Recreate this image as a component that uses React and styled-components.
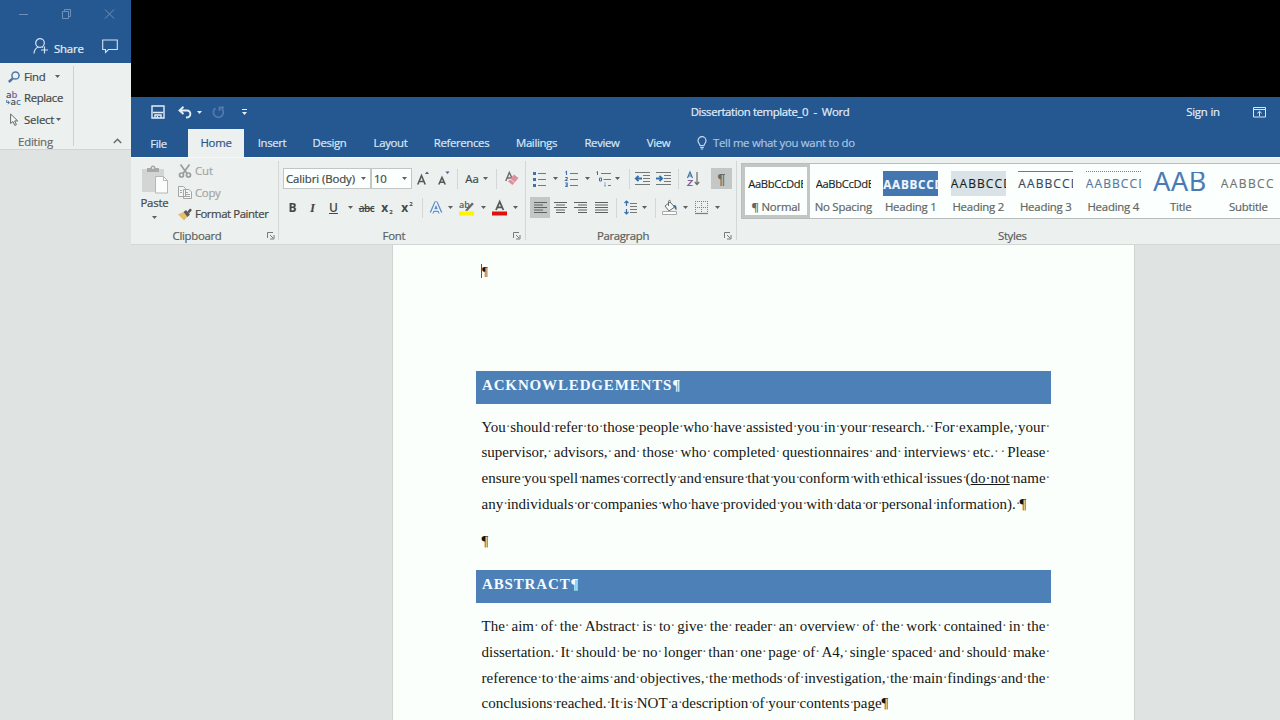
import React from "react";
import styled, { createGlobalStyle, css } from "styled-components";

const blue = "#255791";
const ribbon = "#ecf0ee";
const ink = "#444846";

const GlobalStyle = createGlobalStyle`
  * { box-sizing: border-box; }
  body { margin: 0; overflow: hidden; background: #dfe3e1; }
`;

const Screen = styled.div`
  width: 1280px;
  height: 720px;
  display: flex;
  overflow: hidden;
  background: #dfe3e1;
  color: ${ink};
  font: 11.4px/16px "Open Sans", "Noto Sans", sans-serif;
  white-space: nowrap;
`;

const Text = styled.span`
  display: block;
  flex: none;
  letter-spacing: ${(p) => p.$ls ?? -0.35}px;
  padding-top: ${(p) => p.$drop || 0}px;
  color: ${(p) => p.$color || "inherit"};
  white-space: pre;
  -webkit-text-stroke: 0.2px currentColor;
`;

const Item = styled.div`
  flex: none;
  display: flex;
  align-items: center;
  justify-content: ${(p) => (p.$left ? "flex-start" : "center")};
  width: ${(p) => p.$w}px;
  height: ${(p) => (p.$h ? p.$h + "px" : "auto")};
  margin-left: ${(p) => p.$gap || 0}px;
  background: ${(p) => (p.$pressed ? "#c3c7c5" : "none")};
  svg { flex: none; display: block; overflow: visible; }
`;

/* ---- left window ---- */
const SideWindow = styled.aside`
  width: 131px;
  flex: none;
  display: flex;
  flex-direction: column;
`;
const SideHeader = styled.div`
  height: 63px;
  background: ${blue};
  color: #e6f0f8;
`;
const WindowButtons = styled.div`
  display: flex;
  align-items: center;
  height: 28px;
  padding-left: 17px;
`;
const ShareRow = styled.div`
  display: flex;
  align-items: center;
  height: 35px;
  padding: 2px 0 0 33px;
`;
const SideRibbon = styled.div`
  height: 87px;
  display: flex;
  background: ${ribbon};
  border-bottom: 1px solid #d0d4d2;
`;
const EditingGroup = styled.div`
  width: 74px;
  height: 80px;
  margin-top: 3px;
  border-right: 1px solid #cdd1cf;
`;
const EditRow = styled.div`
  display: flex;
  align-items: center;
  height: 21.6px;
`;
const EditLabel = styled.div`
  padding: 3px 0 0 18px;
  color: #666a68;
`;
const Collapse = styled.div`
  flex: 1;
  display: flex;
  align-items: flex-end;
  justify-content: flex-end;
  padding: 0 9px 5px 0;
`;

/* ---- main window ---- */
const MainWindow = styled.main`
  flex: 1;
  min-width: 0;
  display: flex;
  flex-direction: column;
  overflow: hidden;
`;
const Blackout = styled.div`
  height: 97px;
  flex: none;
  background: #000;
`;
const TitleBar = styled.header`
  display: flex;
  align-items: center;
  flex: none;
  height: 32px;
  padding-bottom: 2px;
  background: ${blue};
  color: #e4eef8;
`;
const TabBar = styled.nav`
  display: flex;
  flex: none;
  height: 28px;
  background: ${blue};
  color: #dbe7f3;
`;
const Tab = styled.div`
  flex: none;
  display: flex;
  align-items: center;
  justify-content: center;
  width: ${(p) => p.$w}px;
  padding-top: ${(p) => p.$drop || 0}px;
  ${(p) => p.$active && css`background: ${ribbon}; color: #2b5488;`}
`;
const Ribbon = styled.section`
  display: flex;
  flex: none;
  height: 88px;
  background: ${ribbon};
  border-top: 1px solid #f4f8f6;
  border-bottom: 1px solid #d2d6d4;
`;
const Group = styled.div`
  flex: none;
  width: ${(p) => p.$w}px;
  display: flex;
  flex-direction: column;
`;
const Divider = styled.div`
  flex: none;
  width: 1px;
  height: 79px;
  margin-top: 3px;
  background: #d3d7d5;
`;
const GroupBody = styled.div`
  height: 70px;
  display: flex;
`;
const ToolRows = styled.div`
  display: flex;
  flex-direction: column;
  padding: 10px 0 0 4px;
`;
const ToolRow = styled.div`
  display: flex;
  align-items: center;
  height: 21px;
  margin-bottom: 8px;
`;
const GroupLabel = styled.div`
  display: flex;
  align-items: center;
  height: 16px;
  color: #5b5f5d;
`;
const Sep = styled.i`
  flex: none;
  width: 1px;
  height: 20px;
  margin-left: ${(p) => p.$gap}px;
  background: #d3d7d5;
`;
const Combo = styled.div`
  flex: none;
  display: flex;
  align-items: center;
  justify-content: space-between;
  width: ${(p) => p.$w}px;
  height: 21px;
  padding: 0 4px 0 2px;
  border: 1px solid #c2c6c4;
  background: #fbfffd;
`;
const PasteButton = styled.div`
  width: 47px;
  display: flex;
  flex-direction: column;
  align-items: center;
  padding-top: 7px;
`;
const ClipRows = styled.div`
  padding-top: 2.5px;
`;
const ClipRow = styled.div`
  display: flex;
  align-items: center;
  height: 21.6px;
  color: ${(p) => (p.$off ? "#a2a6a4" : ink)};
`;
const Glyph = styled.span`
  font: ${(p) => p.$font};
  color: ${(p) => p.$color || ink};
  text-decoration: ${(p) => p.$deco || "none"};
  letter-spacing: ${(p) => p.$ls || 0}px;
  sub, sup { font-size: 6px; line-height: 0; margin-left: 1px; }
  sub { vertical-align: -2px; }
  sup { vertical-align: 6px; }
`;

/* ---- styles gallery ---- */
const StylesGroup = styled.div`
  flex: 1;
  min-width: 0;
  padding: 5px 0 0 4px;
`;
const Gallery = styled.div`
  display: flex;
  height: 56px;
  background: #fbfffd;
  border: solid #b9bdbb;
  border-width: 1px 0 1px 1px;
  overflow: hidden;
`;
const StyleCell = styled.div`
  flex: none;
  width: 67.5px;
  display: flex;
  flex-direction: column;
  align-items: center;
  height: 54px;
  padding-top: 7px;
  box-shadow: ${(p) => (p.$on ? "inset 0 0 0 3px #c2c6c4" : "none")};
  color: #626664;
`;
const Preview = styled.div`
  width: 55px;
  height: 25px;
  overflow: hidden;
  display: flex;
  align-items: center;
  margin-bottom: 3px;
  padding-bottom: ${(p) => p.$lift || 0}px;
  background: ${(p) => p.$bg || "none"};
  border-top: ${(p) => p.$line || "1px solid transparent"};
  color: ${(p) => p.$color || "#1b1f1d"};
  font-size: ${(p) => p.$size || 12}px;
  font-weight: ${(p) => p.$weight || 400};
  letter-spacing: ${(p) => p.$ls || 0}px;
  -webkit-text-stroke: 0.15px currentColor;
`;
const StylesLabel = styled.div`
  padding: 9px 0 0 257px;
  color: #5b5f5d;
`;

/* ---- document ---- */
const Page = styled.article`
  flex: 1;
  width: 743px;
  margin-left: 261px;
  padding: 0 82px 0 83px;
  background: #fbfffc;
  border: solid #cfd3d1;
  border-width: 0 1px;
  color: #141615;
  font: 15px/26px "Liberation Serif", serif;
`;
const CursorLine = styled.div`
  display: flex;
  align-items: center;
  height: 125.5px;
  padding: 0 0 73px 5px;
  font-size: 13px;
`;
const Caret = styled.i`
  width: 1px;
  height: 14px;
  background: #555;
`;
const Heading = styled.h2`
  margin: 0;
  height: 33.5px;
  width: 575px;
  padding-left: 6px;
  background: #4c80b7;
  color: #f3fbff;
  font-size: 15px;
  line-height: 28px;
  letter-spacing: ${(p) => p.$ls}px;
`;
const Paragraph = styled.div`
  padding: 9.5px 0 0 5.500px;
  width: 571px;
`;
const Line = styled.div`
  display: flex;
  height: 25.8px;
  width: ${(p) => (p.$natural ? "max-content" : "564px")};
`;
const Space = styled.span`
  flex: ${(p) => (p.$natural ? "0 0 3.73px" : "1 1 0")};
  min-width: 0;
  color: #5a5e5c;
  font-size: 14px;
`;
const Trailing = styled.span`
  width: 0;
  color: #5a5e5c;
  font-size: 14px;
`;
const EmptyLine = styled.div`
  height: 53.3px;
  padding: 11.500px 0 0 5.500px;
`;

const Down = ({ c = "#5c605e" }) => (
  <svg width="5" height="3" viewBox="0 0 5 3"><path d="M0 0h5L2.5 3z" fill={c} /></svg>
);
const Launcher = () => (
  <svg width="8" height="8" viewBox="0 0 8 8" fill="none" stroke="#777b79"><path d="M.5 6V.5H6M3 3l3 3M7 3v4H3" /></svg>
);
const bars = (rows) => (
  <svg width="13" height="11" viewBox="0 0 13 11" stroke="#5c605e" strokeWidth="1">
    {rows.map(([a, b], i) => <path key={i} d={`M${a} ${0.5 + i * 2.5}H${b}`} />)}
  </svg>
);
const ListIcon = ({ kind }) => (
  <svg width="14" height="16" viewBox="0 0 14 16">
    <path d="M5 2.5h8M5 8.5h8M5 14.5h8" stroke="#747876" />
    {kind === "dots" ? (
      <g fill="#3e72ad"><rect y="1" width="3" height="3" /><rect y="7" width="3" height="3" /><rect y="13" width="3" height="3" /></g>
    ) : (
      <g fill="none" stroke="#3e72ad" strokeWidth="1.1"><path d="M.5 1.2 1.5.5V4M.2 6.5h2v1.3L.5 9.5h2M.2 12h2v3.4h-2M.8 13.7h1.4" /></g>
    )}
  </svg>
);
const IndentIcon = ({ right }) => (
  <svg width="15" height="13" viewBox="0 0 15 13" fill="none">
    <path d="M0 .5h15M8 3.5h7M8 6.5h7M8 9.5h7M0 12.5h15" stroke="#747876" />
    <path d={right ? "M0 6.5h6M3.5 3.8l2.7 2.7-2.7 2.7" : "M1 6.5h6M3.5 3.8.8 6.5l2.7 2.7"} stroke="#3470ad" strokeWidth="1.8" />
  </svg>
);

function SidePanel() {
  return (
    <SideWindow>
      <SideHeader>
        <WindowButtons>
          <svg width="100" height="12" viewBox="0 0 100 12" fill="none" stroke="#6d91bb">
            <path d="M2 6.500h9M45.500 3.500h6v7h-6zM47.500 3.500v-2h6v7h-2M88 1.500l9 9M97 1.500l-9 9" />
          </svg>
        </WindowButtons>
        <ShareRow>
          <svg width="15" height="17" viewBox="0 0 15 17" fill="none" stroke="#d4e2f0" strokeWidth="1.2">
            <circle cx="7" cy="5" r="4.300" /><path d="M1 15.500c.3-3.500 2-5.800 4.500-6.500M9 9l1 .6M11.500 8.500v7M8 12h7" />
          </svg>
          <Item $w={30} $gap={6} $left><Text $ls={-0.2} $drop={4}>Share</Text></Item>
          <Item $w={16} $gap={18}>
            <svg width="16" height="15" viewBox="0 0 16 15" fill="none" stroke="#d4e2f0" strokeWidth="1.1"><path d="M.7 1h14.600v9.500H6.500l-3 3v-3H.7z" /></svg>
          </Item>
        </ShareRow>
      </SideHeader>
      <SideRibbon>
        <EditingGroup>
          <EditRow>
            <Item $w={12} $gap={8}>
              <svg width="12" height="12" viewBox="0 0 12 12" fill="none" stroke="#4b78a8"><circle cx="7.500" cy="4.500" r="3.600" strokeWidth="1.500" /><path d="M4.800 7.300.8 11" strokeWidth="2.400" /></svg>
            </Item>
            <Item $w={29} $gap={4} $left><Text>Find</Text></Item>
            <Item $w={5} $gap={2}><Down /></Item>
          </EditRow>
          <EditRow>
            <Item $w={15} $gap={6}>
              <svg width="15" height="15" viewBox="0 0 15 15" fontFamily="Open Sans" fontSize="9.500" fontWeight="600">
                <text x="0" y="7" fill="#4c504e">a</text><text x="5.500" y="7" fill="#84619b">b</text>
                <text x="4.500" y="14" fill="#4c504e">a</text><text x="10" y="14" fill="#3f7bab">c</text>
                <path d="M.7 9v2.500H3M2 9.800 3.700 11.500 2 13.200" fill="none" stroke="#3f7bab" />
              </svg>
            </Item>
            <Item $w={40} $gap={3} $left><Text>Replace</Text></Item>
          </EditRow>
          <EditRow>
            <Item $w={9} $gap={10}>
              <svg width="9" height="13" viewBox="0 0 9 13" fill="#f5f8f7" stroke="#656967"><path d="M.6 1v9.500l2.400-2 1.800 3.900 1.600-.7-1.700-3.800h3z" /></svg>
            </Item>
            <Item $w={30} $gap={5} $left><Text $ls={-0.2}>Select</Text></Item>
            <Item $w={5} $gap={2}><Down /></Item>
          </EditRow>
          <EditLabel><Text $ls={-0.2}>Editing</Text></EditLabel>
        </EditingGroup>
        <Collapse>
          <svg width="9" height="6" viewBox="0 0 9 6" fill="none" stroke="#666a68" strokeWidth="1.500"><path d="M.8 5 4.500 1.300 8.200 5" /></svg>
        </Collapse>
      </SideRibbon>
    </SideWindow>
  );
}

function TopBars() {
  return (
    <>
      <TitleBar>
        <Item $w={14} $gap={20}>
          <svg width="14" height="14" viewBox="0 0 14 14" fill="none" stroke="#e4eef8" strokeWidth="1.400"><path d="M1 1h12v12H1zM2 7.500h10M4 13v-3h6v3M6.500 11V13" /></svg>
        </Item>
        <Item $w={14} $gap={13}>
          <svg width="14" height="13" viewBox="0 0 14 13" fill="none" stroke="#e4eef8" strokeWidth="1.900"><path d="M5.500.8 1.500 4.500l4 3.500M2 4.500h7c4.500 0 4.800 7-1 7" /></svg>
        </Item>
        <Item $w={5} $gap={5}><Down c="#e4eef8" /></Item>
        <Item $w={13} $gap={10}>
          <svg width="13" height="13" viewBox="0 0 13 13" fill="none" stroke="#507bac" strokeWidth="1.800"><path d="M3.500 2.200a5 5 0 1 0 6 .2M7.500 5V1.500h4.500" /></svg>
        </Item>
        <Item $w={5} $gap={17}>
          <svg width="5" height="7" viewBox="0 0 5 7" fill="#e4eef8"><path d="M0 0h5v1H0zM0 3h5L2.500 6z" /></svg>
        </Item>
        <Item $w={160} $gap={443}><Text $ls={-0.38}>{"Dissertation template_0  -  Word"}</Text></Item>
        <Item $w={34} $gap={336}><Text $ls={-0.2}>Sign in</Text></Item>
        <Item $w={13} $gap={33}>
          <svg width="13" height="11" viewBox="0 0 13 11" fill="none" stroke="#dbe7f3"><path d="M.5.500h12v9.500H.500zM.500 2.500h12M6.500 9V4.500M4.300 6.300l2.200-2 2.200 2" /></svg>
        </Item>
      </TitleBar>
      <TabBar>
        <Tab $w={55} $drop={2}><Text>File</Text></Tab>
        <Tab $w={2} />
        <Tab $w={56} $active><Text $ls={-0.3}>Home</Text></Tab>
        <Tab $w={56}><Text>Insert</Text></Tab>
        <Tab $w={59}><Text>Design</Text></Tab>
        <Tab $w={63}><Text>Layout</Text></Tab>
        <Tab $w={79}><Text>References</Text></Tab>
        <Tab $w={71}><Text>Mailings</Text></Tab>
        <Tab $w={60}><Text>Review</Text></Tab>
        <Tab $w={53}><Text>View</Text></Tab>
        <Item $w={10} $gap={12}>
          <svg width="10" height="14" viewBox="0 0 10 14" fill="none" stroke="#c9dbee" strokeWidth="1.200"><path d="M3 9.500C3 7.800 1 7 1 4.700a4 4 0 0 1 8 0C9 7 7 7.800 7 9.500zM3.200 11.300h3.600M3.800 13h2.400" /></svg>
        </Item>
        <Item $w={144} $gap={6} $left><Text $color="#a9c5e2" $ls={-0.3}>Tell me what you want to do</Text></Item>
      </TabBar>
    </>
  );
}

function ClipboardGroup() {
  return (
    <Group $w={147}>
      <GroupBody>
        <PasteButton>
          <svg width="28" height="29" viewBox="0 0 28 29" fill="none">
            <path d="M1 4h22v23H1z" fill="#d2d5d4" />
            <path d="M6 3h3.500a2.500 2.500 0 0 1 5 0H18v4H6z" fill="#a5a9a7" /><circle cx="12" cy="3" r="1" fill="#ecf0ee" />
            <path d="M14.500 11.500h8l4 4v12.500h-12z" fill="#fbfdfc" stroke="#b3b7b5" /><path d="M22.500 11.500v4h4" stroke="#b3b7b5" />
          </svg>
          <Item $w={30} $h={18}><Text $ls={-0.2}>Paste</Text></Item>
          <Item $w={5} $h={10}><Down /></Item>
        </PasteButton>
        <ClipRows>
          <ClipRow $off>
            <Item $w={14}>
              <svg width="14" height="14" viewBox="0 0 14 14" fill="none" stroke="#9a9e9c" strokeWidth="1.700"><path d="M2.500.5l6.500 9M11.500.5 5 9.500" /><circle cx="3.500" cy="11" r="2" /><circle cx="10.500" cy="11" r="2" /></svg>
            </Item>
            <Item $w={20} $gap={3} $left><Text $ls={-0.1}>Cut</Text></Item>
          </ClipRow>
          <ClipRow $off>
            <Item $w={14}>
              <svg width="14" height="13" viewBox="0 0 14 13" fill="#f2f5f4" stroke="#a2a6a4"><path d="M.5.500h5l2 2v8h-7zM5.500 3.500h5.500l2.500 2.500v6.500h-8zM7 6.500h3M7 8.500h5M7 10.500h5M2 4.500h2M2 6.500h2" /></svg>
            </Item>
            <Item $w={28} $gap={3} $left><Text $ls={-0.3}>Copy</Text></Item>
          </ClipRow>
          <ClipRow>
            <Item $w={14}>
              <svg width="14" height="13" viewBox="0 0 14 13"><path d="M0 6.500 5.500 4l4 4.500L6 12.500z" fill="#e6bd68" /><path d="M5.500 4 8 2l4 4.500-2.500 2.500z" fill="#5b5a58" /><path d="M9.500 3.500 12 .5l2 1.500-3 3.500z" fill="#555" /></svg>
            </Item>
            <Item $w={76} $gap={3} $left><Text $ls={-0.43}>Format Painter</Text></Item>
          </ClipRow>
        </ClipRows>
      </GroupBody>
      <GroupLabel>
        <Item $w={48} $gap={42}><Text $ls={-0.3}>Clipboard</Text></Item>
        <Item $w={8} $gap={46}><Launcher /></Item>
      </GroupLabel>
    </Group>
  );
}

const sansBold = 'bold 12px/16px "Open Sans", sans-serif';

function FontGroup() {
  return (
    <Group $w={246}>
      <GroupBody>
        <ToolRows>
          <ToolRow>
            <Combo $w={88}><Text $ls={-0.1}>Calibri (Body)</Text><Down /></Combo>
            <Combo $w={41}><Text>10</Text><Down /></Combo>
            <Item $w={22}>
              <svg width="13" height="15" viewBox="0 0 13 15"><path d="m.8 13.500 3.700-9 3.700 9M2.200 10.500h4.600" fill="none" stroke="#555957" strokeWidth="1.600" /><path d="m8 3 2-2.500L12 3z" fill="#3a5f91" /></svg>
            </Item>
            <Item $w={20}>
              <svg width="12" height="15" viewBox="0 0 12 15"><path d="m.8 13.500 3.200-7 3.200 7M2 11.200h4" fill="none" stroke="#555957" strokeWidth="1.600" /><path d="m7.500.5L9.500 3l2-2.500z" fill="#3a5f91" /></svg>
            </Item>
            <Sep $gap={3} />
            <Item $w={18} $gap={5}><Text $ls={0}>Aa</Text></Item>
            <Item $w={5} $gap={2}><Down /></Item>
            <Sep $gap={8} />
            <Item $w={14} $gap={8}>
              <svg width="14" height="15" viewBox="0 0 14 15"><path d="m.8 10 3.500-8.500L7.500 8M2 7h4" fill="none" stroke="#686c6a" strokeWidth="1.400" /><path d="m9 3.500 4.500 3.500-6 7L3 10.500z" fill="#df8e9c" /><path d="m5 8 4.500 3.500" stroke="#f4dce0" /></svg>
            </Item>
          </ToolRow>
          <ToolRow>
            <Item $w={19}><Glyph $font={sansBold}>B</Glyph></Item>
            <Item $w={21}><Glyph $font={'italic bold 13px/16px "Liberation Serif", serif'}>I</Glyph></Item>
            <Item $w={21}><Glyph $font={'600 12px/16px "Open Sans", sans-serif'} $deco="underline">U</Glyph></Item>
            <Item $w={12}><Down /></Item>
            <Item $w={21}><Glyph $font={'600 10px/16px "Open Sans", sans-serif'} $deco="line-through" $ls={-0.5}>abc</Glyph></Item>
            <Item $w={20}><Glyph $font={sansBold}>x<sub>2</sub></Glyph></Item>
            <Item $w={20}><Glyph $font={sansBold}>x<sup>2</sup></Glyph></Item>
            <Sep $gap={5} />
            <Item $w={18} $gap={4}>
              <svg width="14" height="14" viewBox="0 0 14 14" fill="none"><path d="M2.500 12 7 2l4.500 10M4.500 9h5" stroke="#5f90c6" strokeWidth="4" strokeLinejoin="round" /><path d="M2.500 12.500 7 2l4.500 10.500M4.500 9h5" stroke="#f4f8fa" strokeWidth="1.500" /></svg>
            </Item>
            <Item $w={10}><Down /></Item>
            <Item $w={24}>
              <svg width="16" height="16" viewBox="0 0 16 16"><text x="0" y="8" fontFamily="Open Sans" fontSize="9" fontWeight="600" fill="#555957">ab</text><path d="m6 10.500 7-8 1.800 1.500-6.500 7z" fill="#646866" /><path d="M0 11.500h15v4H0z" fill="#fbf500" /></svg>
            </Item>
            <Item $w={8}><Down /></Item>
            <Item $w={25}>
              <svg width="15" height="16" viewBox="0 0 15 16"><path d="m4 10 3.700-8.300 3.700 8.300M5.500 7.300h4.500" fill="none" stroke="#555957" strokeWidth="1.800" /><path d="M0 11.500h15v4H0z" fill="#e0100f" /></svg>
            </Item>
            <Item $w={6}><Down /></Item>
          </ToolRow>
        </ToolRows>
      </GroupBody>
      <GroupLabel>
        <Item $w={24} $gap={103}><Text $ls={-0.2}>Font</Text></Item>
        <Item $w={8} $gap={107}><Launcher /></Item>
      </GroupLabel>
    </Group>
  );
}

function ParagraphGroup() {
  return (
    <Group $w={210}>
      <GroupBody>
        <ToolRows>
          <ToolRow>
            <Item $w={14} $gap={3}><ListIcon kind="dots" /></Item>
            <Item $w={5} $gap={6}><Down /></Item>
            <Item $w={14} $gap={7}><ListIcon /></Item>
            <Item $w={5} $gap={6}><Down /></Item>
            <Item $w={16} $gap={6}>
              <svg width="16" height="16" viewBox="0 0 16 16" fill="none" stroke="#747876"><path d="M5 2.500h10M7.500 8.500H15M12 14.500h3" /><path d="M.5 1.200 1.500.5V4M3.500 7h2v3h-2zM9 11.500v1M9 13.500v2" stroke="#3e72ad" /></svg>
            </Item>
            <Item $w={5} $gap={3}><Down /></Item>
            <Sep $gap={9} />
            <Item $w={15} $gap={5}><IndentIcon /></Item>
            <Item $w={15} $gap={6}><IndentIcon right /></Item>
            <Sep $gap={7} />
            <Item $w={13} $gap={8}>
              <svg width="13" height="16" viewBox="0 0 13 16" fill="none" strokeWidth="1.200"><path d="m.5 7 2.500-6 2.500 6M1.300 5h3.400" stroke="#3e72ad" /><path d="M.8 9.500h4.400L.8 14.500h4.700" stroke="#84619b" /><path d="M10 1v12.500M7.800 11 10 13.500l2.200-2.500" stroke="#686c6a" /></svg>
            </Item>
            <Item $w={21} $h={21} $gap={11} $pressed><Glyph $font={'bold 14px/16px "Liberation Sans", sans-serif'} $color="#666a68">¶</Glyph></Item>
          </ToolRow>
          <ToolRow>
            <Item $w={20} $h={21} $pressed>{bars([[0, 13], [0, 9], [0, 13], [0, 9], [0, 13]])}</Item>
            <Item $w={13} $gap={4}>{bars([[0, 13], [2, 11], [0, 13], [2, 11], [2, 11]])}</Item>
            <Item $w={13} $gap={7}>{bars([[0, 13], [4, 13], [0, 13], [4, 13], [4, 13]])}</Item>
            <Item $w={13} $gap={8}>{bars([[0, 13], [0, 13], [0, 13], [0, 13], [0, 13]])}</Item>
            <Sep $gap={8} />
            <Item $w={13} $gap={7}>
              <svg width="13" height="15" viewBox="0 0 13 15" fill="none"><path d="M6 3.500h7M6 6.500h7M6 9.500h7M6 12.500h7" stroke="#747876" /><path d="M2.500 1v5M.500 3l2-2 2 2M2.500 14V9M.500 12l2 2 2-2" stroke="#3470ad" strokeWidth="1.200" /></svg>
            </Item>
            <Item $w={5} $gap={5}><Down /></Item>
            <Sep $gap={8} />
            <Item $w={16} $gap={6}>
              <svg width="16" height="16" viewBox="0 0 16 16" fill="none"><path d="m3 6 5-4 4.500 5L7 11z" fill="#f8faf9" stroke="#686c6a" /><path d="M6.500 6V1.500C6.500 0 8.500 0 8.500 1.500" stroke="#686c6a" /><path d="M11 5c3-.5 4 1.500 3.500 5-1.500 0-2-3-3.500-5" fill="#3f6a9c" /><path d="M.5 11.500h14v3H.5z" fill="#fff" stroke="#a5a9a7" /></svg>
            </Item>
            <Item $w={5} $gap={5}><Down /></Item>
            <Item $w={13} $gap={7}>
              <svg width="13" height="13" viewBox="0 0 13 13" fill="none" stroke="#7c807e"><path d="M0 .5h13M.5 0v12M12.500 0v12M6.500 0v12M0 6.500h13" strokeDasharray="1 1" /><path d="M0 12.500h13" strokeWidth="1.200" /></svg>
            </Item>
            <Item $w={5} $gap={7}><Down /></Item>
          </ToolRow>
        </ToolRows>
      </GroupBody>
      <GroupLabel>
        <Item $w={52} $gap={71}><Text>Paragraph</Text></Item>
        <Item $w={8} $gap={75}><Launcher /></Item>
      </GroupLabel>
    </Group>
  );
}

const galleryStyles = [
  { name: "¶ Normal", text: "AaBbCcDdE", on: true, ls: -0.35, size: 11.2 },
  { name: "No Spacing", text: "AaBbCcDdE", ls: -0.35, size: 11.2 },
  { name: "Heading 1", text: "AABBCCD", bg: "#4476b0", color: "#eef7ff", weight: 700, ls: 0.75, size: 11.7 },
  { name: "Heading 2", text: "AABBCCD", bg: "#d9e2e6", ls: 1.1 },
  { name: "Heading 3", text: "AABBCCD", line: "1px solid #557fb5", color: "#36495d", ls: 1.1 },
  { name: "Heading 4", text: "AABBCCD", line: "1px dotted #6d87a8", color: "#56799f", ls: 1.1 },
  { name: "Title", text: "AAB", color: "#4a7ab3", size: 27, ls: 0.7, lift: 7 },
  { name: "Subtitle", text: "AABBCC", color: "#707472", ls: 1.4 },
];

function StyleGallery() {
  return (
    <StylesGroup>
      <Gallery>
        {galleryStyles.map((s) => (
          <StyleCell key={s.name} $on={s.on}>
            <Preview $bg={s.bg} $line={s.line} $color={s.color} $size={s.size} $weight={s.weight} $ls={s.ls} $lift={s.lift}>{s.text}</Preview>
            <Text $ls={-0.22}>{s.name}</Text>
          </StyleCell>
        ))}
      </Gallery>
      <StylesLabel><Text>Styles</Text></StylesLabel>
    </StylesGroup>
  );
}

function TextLine({ text, natural }) {
  const parts = text.split(/( )/).filter(Boolean);
  return (
    <Line $natural={natural}>
      {parts.map((part, i) => {
        if (part === " ") return <Space key={i} $natural={natural}>·</Space>;
        if (part === "_do_not") return <span key={i}>(<u>do·not</u></span>;
        return <span key={i}>{part}</span>;
      })}
      {!natural && <Trailing>·</Trailing>}
    </Line>
  );
}

function Document() {
  return (
    <Page>
      <CursorLine><Caret />¶</CursorLine>
      <Heading $ls={0.85}>ACKNOWLEDGEMENTS¶</Heading>
      <Paragraph>
        <TextLine text="You should refer to those people who have assisted you in your research.  For example, your" />
        <TextLine text="supervisor, advisors, and those who completed questionnaires and interviews etc.  Please" />
        <TextLine text="ensure you spell names correctly and ensure that you conform with ethical issues _do_not name" />
        <TextLine natural text="any individuals or companies who have provided you with data or personal information). ¶" />
      </Paragraph>
      <EmptyLine>¶</EmptyLine>
      <Heading $ls={0.85}>ABSTRACT¶</Heading>
      <Paragraph>
        <TextLine text="The aim of the Abstract is to give the reader an overview of the work contained in the" />
        <TextLine text="dissertation. It should be no longer than one page of A4, single spaced and should make" />
        <TextLine text="reference to the aims and objectives, the methods of investigation, the main findings and the" />
        <TextLine natural text="conclusions reached. It is NOT a description of your contents page¶" />
      </Paragraph>
    </Page>
  );
}

export default function App() {
  return (
    <>
      <GlobalStyle />
      <Screen>
        <SidePanel />
        <MainWindow>
          <Blackout />
          <TopBars />
          <Ribbon>
            <ClipboardGroup />
            <Divider />
            <FontGroup />
            <Divider />
            <ParagraphGroup />
            <Divider />
            <StyleGallery />
          </Ribbon>
          <Document />
        </MainWindow>
      </Screen>
    </>
  );
}
